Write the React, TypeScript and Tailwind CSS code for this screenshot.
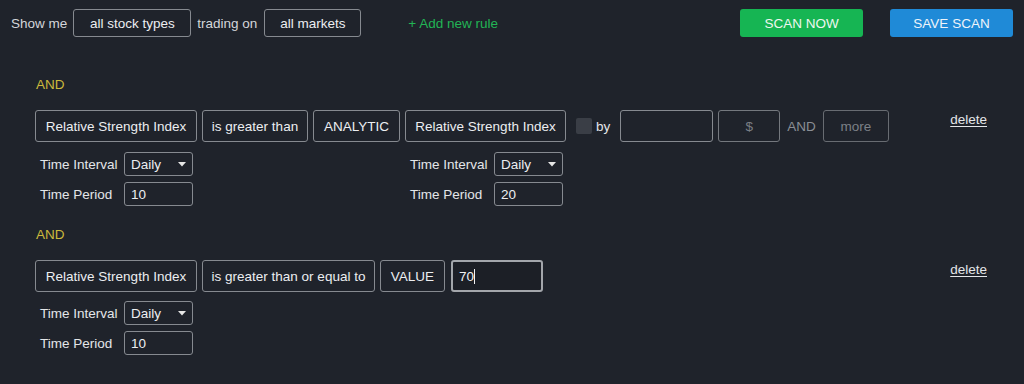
import React from "react";

function Box({ w, children, className = "" }: { w: string; children?: React.ReactNode; className?: string }) {
  return (
    <div
      className={`${w} h-[32px] shrink-0 flex items-center justify-center rounded-[3px] border border-[#868a90] text-[#eceef1] whitespace-nowrap ${className}`}
    >
      {children}
    </div>
  );
}

function Select() {
  return (
    <div className="w-[69px] h-[24px] flex items-center justify-between pl-[6px] pr-[6px] rounded-[3px] border border-[#868a90] text-[#eceef1]">
      <span>Daily</span>
      <svg width="8" height="5" viewBox="0 0 8 5">
        <path d="M0 0 L8 0 L4 4.5 Z" fill="#e6e6e6" />
      </svg>
    </div>
  );
}

function Field({ value }: { value: string }) {
  return (
    <div className="w-[69px] h-[24px] flex items-center pl-[6px] rounded-[3px] border border-[#868a90] text-[#eceef1]">
      {value}
    </div>
  );
}

function Params({ period, className = "" }: { period: string; className?: string }) {
  return (
    <div className={`flex flex-col gap-[6px] pl-[5px] ${className}`}>
      <div className="flex items-center">
        <span className="w-[84px] text-[#e4e6e9]">Time Interval</span>
        <Select />
      </div>
      <div className="flex items-center">
        <span className="w-[84px] text-[#e4e6e9]">Time Period</span>
        <Field value={period} />
      </div>
    </div>
  );
}

function AndLabel({ className = "" }: { className?: string }) {
  return <div className={`pl-[1px] leading-[15px] text-[#cbb93c] ${className}`}>AND</div>;
}

function Delete() {
  return <span className="ml-auto mt-[2px] leading-[15px] underline underline-offset-2 text-[#e4e6e9]">delete</span>;
}

export default function App() {
  return (
    <div className="w-full h-[384px] overflow-hidden bg-[#1f232b] text-[13.5px] leading-[15px] font-['Liberation_Sans',Arial,sans-serif] text-[#d8dadd]">
      {/* top bar */}
      <div className="flex items-center h-[28px] mt-[9px] pl-[11px] pr-[11px]">
        <span className="text-[#d4d6da]">Show me</span>
        <div className="ml-[6px] w-[118px] h-[28px] flex items-center justify-center rounded-[3px] border border-[#868a90] text-[#eceef1]">
          all stock types
        </div>
        <span className="ml-[6px] text-[#d4d6da]">trading on</span>
        <div className="ml-[7px] w-[97px] h-[28px] flex items-center justify-center rounded-[3px] border border-[#868a90] text-[#eceef1]">
          all markets
        </div>
        <span className="ml-[47px] text-[#22b455]">+ Add new rule</span>
        <button className="ml-auto w-[123px] h-[28px] rounded-[3px] bg-[#16b553] text-[#eef7f0]">SCAN NOW</button>
        <button className="ml-[27px] w-[123px] h-[28px] rounded-[3px] bg-[#1f8ad7] text-[#eef4fa]">SAVE SCAN</button>
      </div>

      <div className="pl-[35px] pr-[37px]">
        {/* rule 1 */}
        <AndLabel className="mt-[40px]" />
        <div className="flex items-start mt-[18px]">
          <div className="flex flex-col">
            <div className="flex items-center">
              <Box w="w-[162px]">Relative Strength Index</Box>
              <Box w="w-[106px]" className="ml-[5px]">is greater than</Box>
              <Box w="w-[87px]" className="ml-[5px]">ANALYTIC</Box>
              <Box w="w-[161px]" className="ml-[5px]">Relative Strength Index</Box>
              <div className="ml-[10px] w-[16px] h-[16px] rounded-[2px] bg-[#3a3e46]" />
              <span className="ml-[4px] text-[#e4e6e9]">by</span>
              <div className="ml-[10px] w-[93px] h-[32px] rounded-[3px] border border-[#868a90]" />
              <div className="ml-[5px] w-[62px] h-[32px] flex items-center justify-center rounded-[3px] border border-[#74787e] text-[#7a7e85]">
                $
              </div>
              <span className="ml-[7px] text-[#8a8e94]">AND</span>
              <div className="ml-[7px] w-[66px] h-[32px] flex items-center justify-center rounded-[3px] border border-[#686c72] text-[#7c8087]">
                more
              </div>
            </div>
            <div className="flex mt-[10px]">
              <Params period="10" className="w-[370px]" />
              <Params period="20" />
            </div>
          </div>
          <Delete />
        </div>

        {/* rule 2 */}
        <AndLabel className="mt-[21px]" />
        <div className="flex items-start mt-[18px]">
          <div className="flex flex-col">
            <div className="flex items-center">
              <Box w="w-[162px]">Relative Strength Index</Box>
              <Box w="w-[173px]" className="ml-[5px]">is greater than or equal to</Box>
              <Box w="w-[65px]" className="ml-[5px]">VALUE</Box>
              <div className="ml-[6px] w-[92px] h-[32px] flex items-center pl-[6px] rounded-[3px] border-2 border-[#a3a6ab] bg-[#1c1f26] text-[#f2f3f5]">
                <span>70</span>
                <span className="w-[1px] h-[15px] bg-[#f2f3f5]" />
              </div>
            </div>
            <div className="flex mt-[9px]">
              <Params period="10" />
            </div>
          </div>
          <Delete />
        </div>
      </div>
    </div>
  );
}
